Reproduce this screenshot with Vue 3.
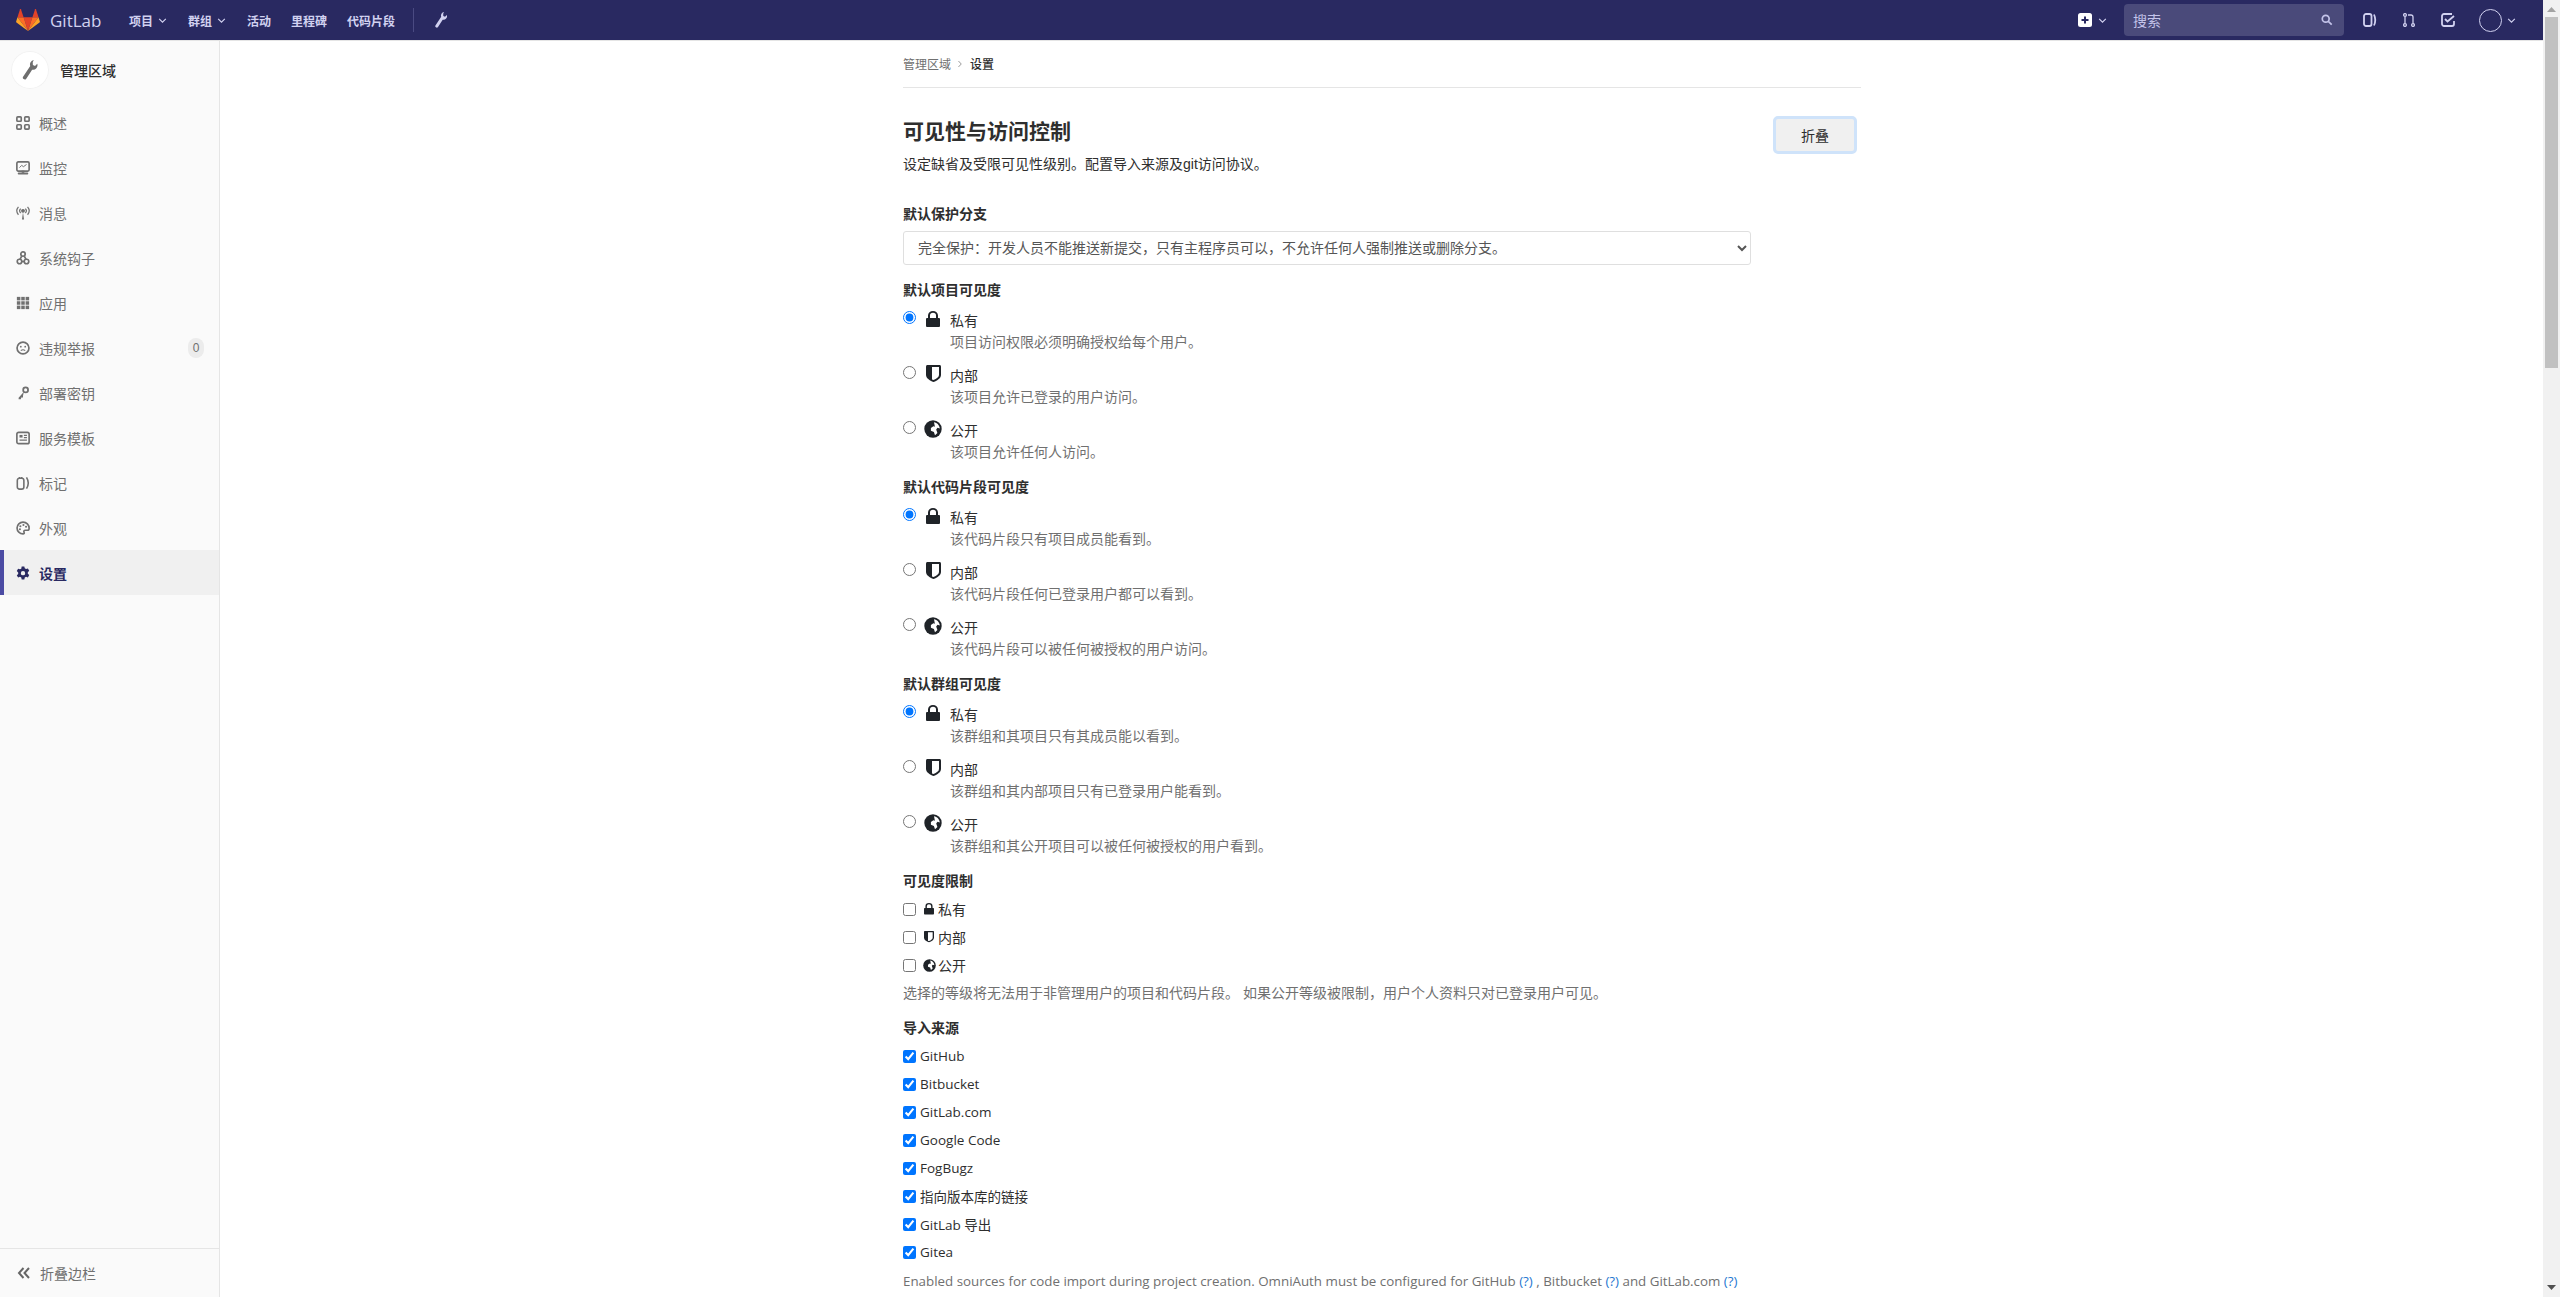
<script setup>
const nav = [
  { label: '概述', icon: 'overview' },
  { label: '监控', icon: 'monitor' },
  { label: '消息', icon: 'messages' },
  { label: '系统钩子', icon: 'hook' },
  { label: '应用', icon: 'apps' },
  { label: '违规举报', icon: 'abuse', badge: '0' },
  { label: '部署密钥', icon: 'key' },
  { label: '服务模板', icon: 'template' },
  { label: '标记', icon: 'labels' },
  { label: '外观', icon: 'appearance' },
  { label: '设置', icon: 'settings', active: true }
]
const groups = [
  { title: '默认项目可见度', name: 'p', items: ['项目访问权限必须明确授权给每个用户。', '该项目允许已登录的用户访问。', '该项目允许任何人访问。'] },
  { title: '默认代码片段可见度', name: 's', items: ['该代码片段只有项目成员能看到。', '该代码片段任何已登录用户都可以看到。', '该代码片段可以被任何被授权的用户访问。'] },
  { title: '默认群组可见度', name: 'g', items: ['该群组和其项目只有其成员能以看到。', '该群组和其内部项目只有已登录用户能看到。', '该群组和其公开项目可以被任何被授权的用户看到。'] }
]
const levels = [
  { label: '私有', icon: 'lock' },
  { label: '内部', icon: 'shield' },
  { label: '公开', icon: 'globe' }
]
const sources = ['GitHub', 'Bitbucket', 'GitLab.com', 'Google Code', 'FogBugz', '指向版本库的链接', 'GitLab 导出', 'Gitea']
</script>

<template>
  <div class="page">
    <div class="main-col">
      <header class="topbar">
        <div class="brand">
          <svg class="logo" viewBox="0 0 36 36" width="24" height="24">
            <path fill="#e24329" d="M18 34.5 24.6 14H11.4z"/>
            <path fill="#fc6d26" d="M18 34.5 11.4 14H2.2z"/>
            <path fill="#fca326" d="M2.2 14 .2 20.2c-.2.6 0 1.2.5 1.6L18 34.5z"/>
            <path fill="#e24329" d="M2.2 14h9.2L7.4 1.8c-.2-.6-1.1-.6-1.3 0z"/>
            <path fill="#fc6d26" d="M18 34.5 24.6 14h9.2z"/>
            <path fill="#fca326" d="m33.8 14 2 6.2c.2.6 0 1.2-.5 1.6L18 34.5z"/>
            <path fill="#e24329" d="M33.8 14h-9.2l4-12.2c.2-.6 1.1-.6 1.3 0z"/>
          </svg>
          <span class="brand-name">GitLab</span>
        </div>
        <nav class="topnav">
          <a class="tn">项目<svg class="chev" viewBox="0 0 10 6"><path d="M1 1l4 4 4-4" fill="none" stroke="currentColor" stroke-width="1.4"/></svg></a>
          <a class="tn">群组<svg class="chev" viewBox="0 0 10 6"><path d="M1 1l4 4 4-4" fill="none" stroke="currentColor" stroke-width="1.4"/></svg></a>
          <a class="tn">活动</a>
          <a class="tn">里程碑</a>
          <a class="tn">代码片段</a>
          <span class="tn-sep"></span>
          <svg class="tn-wrench" viewBox="0 0 12 16"><path fill="currentColor" d="M9 0a3.6 3.6 0 0 0-2.8 4.8L.6 13.2a1.5 1.5 0 0 0 2.4 1.8l4.7-7.3A3.6 3.6 0 0 0 11.8 3L10 4.7 8.3 4 8.200 1.8z"/></svg>
        </nav>
        <div class="top-right">
          <svg class="plus" viewBox="0 0 14 14"><rect width="14" height="14" rx="2.5" fill="#fff"/><path d="M7 3.5v7M3.5 7h7" stroke="#292961" stroke-width="2"/></svg>
          <svg class="chev plus-chev" viewBox="0 0 10 6"><path d="M1 1l4 4 4-4" fill="none" stroke="currentColor" stroke-width="1.4"/></svg>
          <div class="search">
            <span>搜索</span>
            <svg viewBox="0 0 14 14" width="12" height="12"><circle cx="5.5" cy="5.5" r="4" fill="none" stroke="currentColor" stroke-width="2"/><path d="M8.5 8.5l4 4" stroke="currentColor" stroke-width="2"/></svg>
          </div>
          <svg class="ti" viewBox="0 0 14 14"><rect x="1" y="1" width="7.5" height="12" rx="2" fill="none" stroke="currentColor" stroke-width="1.8"/><path d="M11 1.5c1.600 3.5 1.600 7.500 0 11" fill="none" stroke="currentColor" stroke-width="1.8"/></svg>
          <svg class="ti mr" viewBox="0 0 12 14"><g fill="none" stroke="currentColor" stroke-width="1.3"><circle cx="2" cy="2" r="1.4"/><circle cx="2" cy="12" r="1.4"/><circle cx="10" cy="12" r="1.4"/><path d="M2 3.5v7M10 10.5V4c0-1.500-.8-2-2-2H5"/></g></svg>
          <svg class="ti todo" viewBox="0 0 14 14"><path d="M13 8v3a2 2 0 0 1-2 2H3a2 2 0 0 1-2-2V3a2 2 0 0 1 2-2h8" fill="none" stroke="currentColor" stroke-width="1.8"/><path d="M4 6l2.500 2.500L13 3" fill="none" stroke="currentColor" stroke-width="1.8"/></svg>
          <span class="avatar"></span>
          <svg class="chev last-chev" viewBox="0 0 10 6"><path d="M1 1l4 4 4-4" fill="none" stroke="currentColor" stroke-width="1.4"/></svg>
        </div>
      </header>

      <div class="body-row">
        <aside class="sidebar">
          <div class="ctx">
            <span class="ctx-avatar">
              <svg viewBox="0 0 12 16" width="16" height="20"><path fill="#6e6e6e" d="M9 0a3.600 3.600 0 0 0-2.800 4.800L.6 13.200a1.500 1.500 0 0 0 2.400 1.800l4.700-7.300A3.600 3.600 0 0 0 11.800 3L10 4.700 8.300 4 8.200 1.800z"/></svg>
            </span>
            <span class="ctx-title">管理区域</span>
          </div>
          <ul class="side-list">
            <li v-for="n in nav" :key="n.label" class="side-item" :class="{ active: n.active }">
              <svg class="side-icon" viewBox="0 0 16 16">
                <g v-if="n.icon === 'overview'" fill="none" stroke="currentColor" stroke-width="1.9"><rect x="1" y="1" width="5" height="5" rx="1"/><rect x="10" y="1" width="5" height="5" rx="1"/><rect x="1" y="10" width="5" height="5" rx="1"/><rect x="10" y="10" width="5" height="5" rx="1"/></g>
                <g v-else-if="n.icon === 'monitor'"><rect x="1" y="1" width="14" height="10.5" rx="1.5" fill="none" stroke="currentColor" stroke-width="1.9"/><path d="M4 7.5l2.500-2.500 2 1.500L12 4" fill="none" stroke="currentColor" stroke-width="1.1"/><rect x="6.5" y="11" width="3" height="2.500" fill="currentColor"/><rect x="2" y="13" width="12" height="2.4" rx="1" fill="currentColor"/></g>
                <g v-else-if="n.icon === 'messages'" fill="none" stroke="currentColor" stroke-width="1.4"><circle cx="8" cy="5.5" r="1.5" fill="currentColor"/><path d="M5.300 3c-1.300 1.400-1.300 3.600 0 5M10.700 3c1.300 1.400 1.300 3.600 0 5M2.800 1c-2.400 2.800-2.400 6.200 0 9M13.200 1c2.400 2.800 2.400 6.200 0 9"/><path d="M8 7.500 6.800 15.500h2.400z" fill="currentColor" stroke="none"/></g>
                <g v-else-if="n.icon === 'hook'" fill="none" stroke="currentColor" stroke-width="1.9"><circle cx="8" cy="3.5" r="2.5"/><path d="M6.500 6l-2 3.500M9.500 6l2 3.500"/><circle cx="4" cy="12" r="2.6"/><circle cx="12" cy="12" r="2.6"/><path d="M6 12h4"/></g>
                <g v-else-if="n.icon === 'apps'" fill="currentColor"><rect x="1" y="1" width="4" height="4"/><rect x="6" y="1" width="4" height="4"/><rect x="11" y="1" width="4" height="4"/><rect x="1" y="6" width="4" height="4"/><rect x="6" y="6" width="4" height="4"/><rect x="11" y="6" width="4" height="4"/><rect x="1" y="11" width="4" height="4"/><rect x="6" y="11" width="4" height="4"/><rect x="11" y="11" width="4" height="4"/></g>
                <g v-else-if="n.icon === 'abuse'"><circle cx="8" cy="8" r="6.8" fill="none" stroke="currentColor" stroke-width="1.9"/><circle cx="5.5" cy="6.5" r="1" fill="currentColor"/><circle cx="10.5" cy="6.5" r="1" fill="currentColor"/><path d="M5.500 11c1.500-1.300 3.500-1.300 5 0" fill="none" stroke="currentColor" stroke-width="1.2"/></g>
                <g v-else-if="n.icon === 'key'"><circle cx="11" cy="4.5" r="2.8" fill="none" stroke="currentColor" stroke-width="2"/><path d="M9 6.500 3 13.500v1.500h2.500l.5-2h2V11z" fill="currentColor"/></g>
                <g v-else-if="n.icon === 'template'"><rect x="1" y="1.5" width="14" height="13" rx="2" fill="none" stroke="currentColor" stroke-width="1.9"/><rect x="4" y="4.5" width="3.5" height="3" fill="currentColor"/><path d="M9 5h3.500M9 7.500h3.500M4 10.500h8.500" stroke="currentColor" stroke-width="1.3"/></g>
                <g v-else-if="n.icon === 'labels'" fill="none" stroke="currentColor" stroke-width="1.8"><rect x="1.5" y="2.5" width="7.5" height="12.5" rx="2.5"/><path d="M4 2.500V1M6.500 2.500V1M12 1.500c2.500 4 2.500 9 0 13"/></g>
                <g v-else-if="n.icon === 'appearance'"><path d="M8 1.200a6.800 6.800 0 1 0 0 13.600c1.400 0 1.700-1 1.200-1.900-.6-1 0-2.300 1.300-2.300h2.500c1.300 0 2-1 2-2.300C15 4.200 12 1.200 8 1.200z" fill="none" stroke="currentColor" stroke-width="1.9"/><circle cx="5" cy="6" r="1.2" fill="currentColor"/><circle cx="8.5" cy="4.5" r="1.2" fill="currentColor"/><circle cx="11.5" cy="6.5" r="1.2" fill="currentColor"/><circle cx="4.5" cy="9.5" r="1.2" fill="currentColor"/></g>
                <path v-else fill="currentColor" fill-rule="evenodd" d="M6.500.5h3l.5 2.200 1.500.8 2.100-.7 1.500 2.700-1.600 1.500v1.800l1.600 1.500-1.500 2.700-2.100-.7-1.500.8-.5 2.400h-3l-.5-2.400-1.500-.8-2.100.7L.9 10.600l1.600-1.500V7.300L.9 5.800l1.500-2.700 2.100.7 1.500-.8zM8 5.700a2.500 2.500 0 1 0 0 5 2.500 2.500 0 0 0 0-5z"/>
              </svg>
              <span class="side-label">{{ n.label }}</span>
              <span v-if="n.badge" class="badge">{{ n.badge }}</span>
            </li>
          </ul>
          <div class="collapse-side">
            <svg viewBox="0 0 14 12" width="14" height="12"><path d="M6.500 1 2 6l4.500 5M12 1 7.500 6l4.500 5" fill="none" stroke="#666" stroke-width="2"/></svg>
            <span>折叠边栏</span>
          </div>
        </aside>

        <main class="content">
          <div class="container">
            <div class="crumbs"><span class="c-link">管理区域</span><svg viewBox="0 0 5 9" width="4" height="8"><path d="M.6.8l3.500 3.700-3.500 3.700" fill="none" stroke="#8c8c8c" stroke-width="1.1"/></svg><span class="c-cur">设置</span></div>
            <section class="head">
              <div>
                <h4>可见性与访问控制</h4>
                <p class="lead">设定缺省及受限可见性级别。配置导入来源及git访问协议。</p>
              </div>
              <button class="btn">折叠</button>
            </section>

            <label class="lbl">默认保护分支</label>
            <select class="sel">
              <option>完全保护：开发人员不能推送新提交，只有主程序员可以，不允许任何人强制推送或删除分支。</option>
            </select>

            <section v-for="g in groups" :key="g.name" class="vis-group">
              <label class="lbl">{{ g.title }}</label>
              <div v-for="(lv, i) in levels" :key="lv.label" class="radio-row">
                <input type="radio" :name="g.name" :checked="i === 0" class="rd" />
                <span class="vis-slot">
                  <svg v-if="lv.icon === 'lock'" class="v-lock" viewBox="0 0 14 16"><path fill="#1f2328" fill-rule="evenodd" d="M0 8a1 1 0 0 1 1-1h1V4.500a5 4.500 0 0 1 10 0V7h1a1 1 0 0 1 1 1v7a1 1 0 0 1-1 1H1a1 1 0 0 1-1-1zM4 7h6V4.500a3 2.800 0 0 0-6 0z"/></svg>
                  <svg v-else-if="lv.icon === 'shield'" class="v-shield" viewBox="0 0 15 17"><path fill="#1f2328" d="M0 1.500C0 .6.600 0 1.500 0h12c.9 0 1.500.6 1.500 1.500V10c0 3-3.500 5.500-7.500 7C3.500 15.500 0 13 0 10z"/><path fill="#fff" d="M6 2h7v8c0 2-2.500 3.800-5.500 5-.5-.2-1-.4-1.500-.6z"/></svg>
                  <svg v-else class="v-globe" viewBox="0 0 18 18"><circle cx="9" cy="9" r="8.7" fill="#1f2328"/><path fill="#fff" d="M10 2.200c3 .5 5.500 3 5.800 6.300l-2.300-.7-1.300 1.700 1.200 3.500-2.400 2.300-1.100-3.400-3-1.200V8l2.500-1.800 1.500.5z"/></svg>
                </span>
                <div class="radio-body">
                  <div class="radio-title">{{ lv.label }}</div>
                  <div class="help">{{ g.items[i] }}</div>
                </div>
              </div>
            </section>

            <label class="lbl stacked">可见度限制</label>
            <label v-for="lv in levels" :key="lv.label" class="chk">
              <input type="checkbox" class="cb" />
              <span class="vis-sm">
                <svg v-if="lv.icon === 'lock'" viewBox="0 0 14 16" width="10" height="11.4"><path fill="#1f2328" fill-rule="evenodd" d="M0 8a1 1 0 0 1 1-1h1V4.500a5 4.500 0 0 1 10 0V7h1a1 1 0 0 1 1 1v7a1 1 0 0 1-1 1H1a1 1 0 0 1-1-1zM4 7h6V4.500a3 2.800 0 0 0-6 0z"/></svg>
                <svg v-else-if="lv.icon === 'shield'" viewBox="0 0 15 17" width="10" height="11.4"><path fill="#1f2328" d="M0 1.500C0 .6.600 0 1.500 0h12c.9 0 1.500.6 1.500 1.500V10c0 3-3.500 5.500-7.500 7C3.500 15.500 0 13 0 10z"/><path fill="#fff" d="M6 2h7v8c0 2-2.500 3.800-5.500 5-.5-.2-1-.4-1.500-.6z"/></svg>
                <svg v-else viewBox="0 0 18 18" width="13" height="13" class="sm-globe"><circle cx="9" cy="9" r="8.7" fill="#1f2328"/><path fill="#fff" d="M10 2.200c3 .5 5.500 3 5.800 6.300l-2.300-.7-1.300 1.700 1.200 3.500-2.400 2.300-1.100-3.400-3-1.200V8l2.500-1.800 1.500.5z"/></svg>
              </span>
              <span>{{ lv.label }}</span>
            </label>
            <div class="help below">选择的等级将无法用于非管理用户的项目和代码片段。 如果公开等级被限制，用户个人资料只对已登录用户可见。</div>

            <label class="lbl stacked src">导入来源</label>
            <label v-for="s in sources" :key="s" class="chk">
              <input type="checkbox" class="cb src-cb" checked />
              <span class="latin">{{ s }}</span>
            </label>
            <div class="help below-src latin-help">Enabled sources for code import during project creation. OmniAuth must be configured for GitHub <a>(?)</a> , Bitbucket <a>(?)</a> and GitLab.com <a>(?)</a></div>
          </div>
        </main>
      </div>
    </div>

    <div class="scrollbar">
      <svg class="sb-arrow" viewBox="0 0 9 5" width="9" height="5"><path d="M4.5 0 9 5H0z" fill="#a3a3a3"/></svg>
      <div class="sb-thumb"></div>
      <svg class="sb-arrow-down" viewBox="0 0 9 5" width="9" height="5"><path d="M4.5 5 9 0H0z" fill="#505050"/></svg>
    </div>
  </div>
</template>

<style>
html, body { margin: 0; height: 100%; overflow: hidden; background: #fff; }
</style>

<style scoped>
.page {
  display: flex;
  height: 1297px;
  overflow: hidden;
  font-family: "Liberation Sans", "Noto Sans CJK SC", sans-serif;
  font-size: 14px;
  color: #2e2e2e;
}
.main-col { flex: 1; min-width: 0; display: flex; flex-direction: column; }
.scrollbar { width: 17px; flex: none; background: #f1f1f1; position: relative; }
.sb-arrow { display: block; margin: 7px auto 0; }
.sb-thumb { position: absolute; left: 2px; right: 2px; top: 17px; height: 351px; background: #c1c1c1; }
.sb-arrow-down { position: absolute; left: 4px; bottom: 7px; }

.topbar {
  height: 40px;
  flex: none;
  background: #292961;
  color: #d1d1f0;
  display: flex;
  align-items: center;
  padding-left: 16px;
  box-shadow: 0 1px 0 #e5e5e5;
  position: relative;
  z-index: 1;
}
.brand { display: flex; align-items: center; gap: 10px; width: 113px; }
.logo { display: block; }
.brand-name { color: #d1d1f0; font-family: "Open Sans", sans-serif; font-size: 17px; }
.topnav { display: flex; align-items: center; }
.tn { display: flex; align-items: center; font-size: 12px; font-weight: 700; margin-right: 20px; color: #d1d1f0; }
.chev { width: 9px; height: 5px; display: block; color: #d1d1f0; }
.tn .chev { margin-left: 5px; margin-right: 1px; }
.tn-sep { width: 1px; height: 24px; background: #4a4a82; margin-left: -2px; margin-right: 21px; }
.tn-wrench { width: 12px; height: 16px; color: #d1d1f0; }
.top-right { margin-left: auto; display: flex; align-items: center; height: 40px; }
.plus { width: 14px; height: 14px; display: block; margin-right: 6px; }
.plus-chev { margin-right: 17px; }
.search {
  width: 220px;
  height: 32px;
  box-sizing: border-box;
  background: #4a4a7a;
  border-radius: 4px;
  display: flex;
  align-items: center;
  justify-content: space-between;
  padding: 0 11px 0 9px;
  font-size: 14px;
  color: #c4c4ea;
  margin-right: 19px;
}
.ti { width: 14px; height: 14px; color: #d1d1f0; margin-right: 26px; display: block; }
.ti.mr { width: 12px; }
.ti.todo { margin-right: 24px; }
.avatar { width: 23px; height: 23px; border-radius: 50%; border: 1px solid #d1d1f0; box-sizing: border-box; margin-right: 5px; }
.last-chev { margin-right: 27px; }

.body-row { flex: 1; min-height: 0; display: flex; }
.sidebar {
  width: 220px;
  flex: none;
  box-sizing: border-box;
  background: #fafafa;
  border-right: 1px solid #e5e5e5;
  display: flex;
  flex-direction: column;
}
.ctx { display: flex; align-items: center; height: 60px; padding: 0 11px; box-sizing: border-box; flex: none; }
.ctx-avatar { width: 38px; height: 38px; border-radius: 50%; background: #fff; display: flex; align-items: center; justify-content: center; box-shadow: 0 0 0 1px #f2f2f2 inset; }
.ctx-title { margin-left: 11px; font-size: 14px; color: #2e2e2e; font-weight: 500; }
.side-list { list-style: none; margin: 0; padding: 0; flex: 1; }
.side-item { height: 45px; display: flex; align-items: center; padding-left: 16px; color: #707070; font-size: 14px; box-sizing: border-box; }
.side-item.active { background: #f0f0f0; color: #292961; font-weight: 600; box-shadow: inset 4px 0 0 #4b4ba3; }
.side-icon { width: 14px; height: 14px; flex: none; margin-right: 9px; display: block; }
.side-label { flex: 1; }
.badge { background: #ececec; color: #707070; border-radius: 8px; font-size: 12px; font-weight: 400; width: 16px; height: 20px; line-height: 20px; text-align: center; margin-right: 15px; }
.collapse-side { height: 49px; flex: none; box-sizing: border-box; border-top: 1px solid #e5e5e5; display: flex; align-items: center; padding-left: 17px; gap: 9px; color: #707070; font-size: 14px; }

.content { flex: 1; min-width: 0; background: #fff; overflow: hidden; }
.container { width: 958px; margin-left: 683px; }
.crumbs { height: 47px; border-bottom: 1px solid #e5e5e5; display: flex; align-items: center; font-size: 12px; gap: 7px; }
.c-link { color: #707070; }
.c-cur { color: #2e2e2e; font-weight: 500; margin-left: 1px; }
.head { display: flex; justify-content: space-between; padding-top: 31px; height: 85px; }
h4 { margin: 0; font-size: 21px; font-weight: 700; line-height: 26px; color: #2e2e2e; }
.lead { margin: 9px 0 0; font-size: 14px; line-height: 20px; color: #2e2e2e; }
.btn { width: 82px; height: 36px; margin: -2px 5px 0 0; background: #f0f0f0; border: 1px solid #e0e0e0; outline: 3px solid #cfe3fa; outline-offset: -2px; border-radius: 4px; font: inherit; color: #2e2e2e; padding: 0; }
.lbl { display: block; font-size: 14px; font-weight: 700; line-height: 20px; color: #2e2e2e; }
.sel { display: block; width: 848px; height: 34px; margin-top: 7px; padding: 0 10px; border: 1px solid #dfdfdf; border-radius: 3px; background: #fff; font: inherit; color: #555; }
.vis-group { margin-top: 15px; padding-bottom: 6px; }
.vis-group + .vis-group { margin-top: 0; }
.vis-group > .lbl { margin-bottom: 6px; }
.radio-row { display: flex; height: 55px; box-sizing: border-box; padding-top: 5px; }
.rd { width: 13px; height: 13px; margin: 0 10px 0 0; accent-color: #0075ff; flex: none; }
.vis-slot { width: 14px; flex: none; margin-right: 10px; position: relative; }
.vis-slot svg { position: absolute; display: block; }
.v-lock { left: 0; top: 0; width: 14px; height: 16px; }
.v-shield { left: 0; top: -1px; width: 15px; height: 17px; }
.v-globe { left: -2px; top: -1px; width: 18px; height: 18px; }
.radio-title { font-size: 14px; line-height: 20px; color: #2e2e2e; }
.help { font-size: 14px; color: #707070; line-height: 20px; }
.radio-body .help { margin-top: 1px; }
.lbl.stacked { margin-bottom: 4px; }
.lbl.src { margin-top: 15px; }
.chk { display: flex; align-items: center; height: 28px; font-size: 14px; color: #2e2e2e; }
.cb { width: 13px; height: 13px; margin: 0 8px 0 0; accent-color: #0075ff; flex: none; }
.src-cb { margin-right: 4px; }
.vis-sm { width: 10px; height: 13px; margin-right: 4px; display: flex; align-items: center; justify-content: center; position: relative; }
.sm-globe { position: absolute; left: -1px; top: 0; }
.latin { font-family: "Open Sans", "Noto Sans CJK SC", sans-serif; font-size: 13.5px; }
.help.below { margin-top: 4px; }
.below-src { margin-top: 5px; }
.latin-help { font-family: "Open Sans", sans-serif; font-size: 13.35px; }
.help a { color: #1f78d1; }
</style>
